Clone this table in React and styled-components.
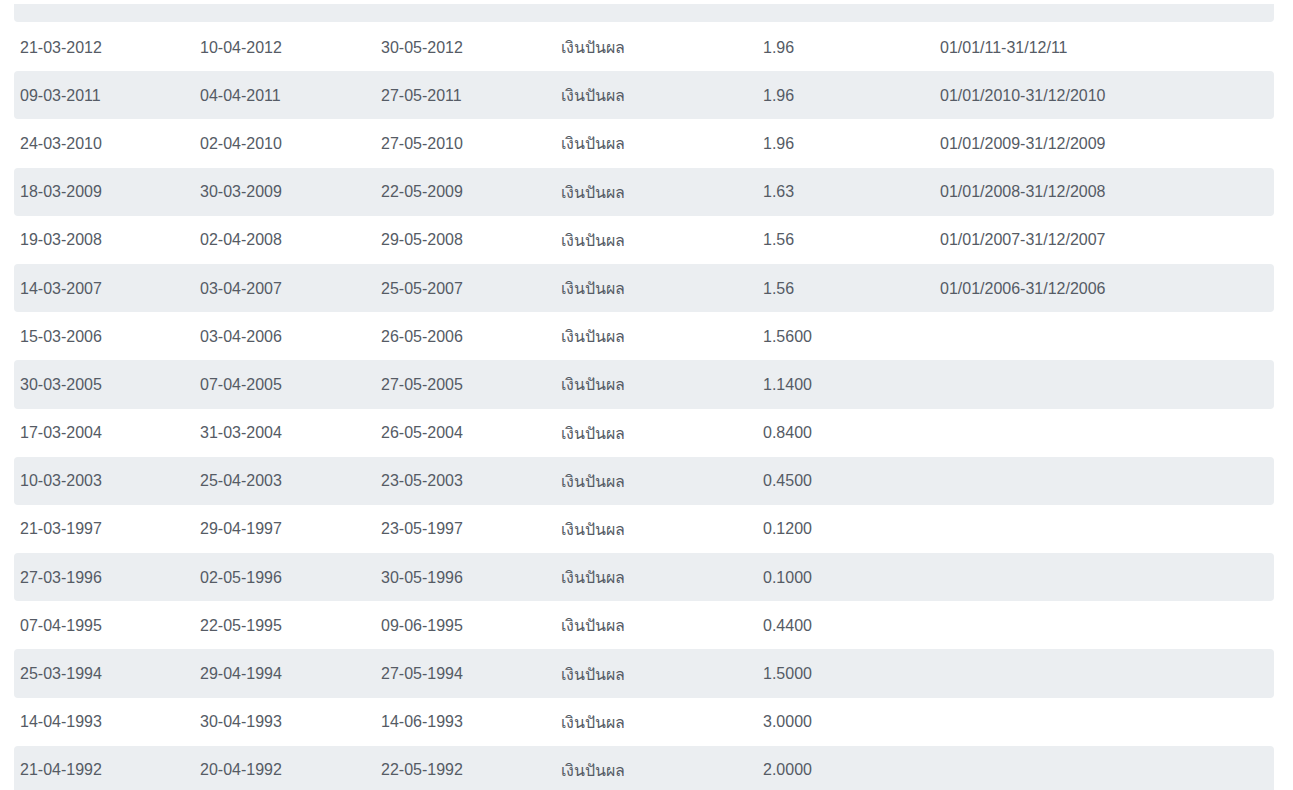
import React from 'react';
import styled, { createGlobalStyle } from 'styled-components';

const GlobalStyle = createGlobalStyle`
    body {
        margin: 0;
        background: #fff;
        font-family: "Liberation Sans", Arial, "Noto Sans", sans-serif;
    }
`;

const Viewport = styled.div`
    height: 788px;
    overflow: hidden;
    border-bottom: 1px solid #d9d9d9;
    padding: 4px 19px 0 14px;
`;

const Row = styled.div`
    display: grid;
    grid-template-columns: 180px 181px 180px 202px 177px 340px;
    height: ${props => props.short ? '18px' : '48.2px'};
    align-items: center;
    background: ${props => props.striped ? '#ebeef1' : 'transparent'};
    border-radius: ${props => props.short ? '0 0 4px 4px' : '4px'};
    margin-bottom: ${props => props.short ? '1px' : '0'};
`;

const Cell = styled.div`
    padding: 1px 0 0 ${props => props.pad || 6}px;
    font-size: 16px;
    color: #555b65;
    white-space: nowrap;
`;

const rows = [
    ['21-03-2012', '10-04-2012', '30-05-2012', '1.96', '01/01/11-31/12/11'],
    ['09-03-2011', '04-04-2011', '27-05-2011', '1.96', '01/01/2010-31/12/2010'],
    ['24-03-2010', '02-04-2010', '27-05-2010', '1.96', '01/01/2009-31/12/2009'],
    ['18-03-2009', '30-03-2009', '22-05-2009', '1.63', '01/01/2008-31/12/2008'],
    ['19-03-2008', '02-04-2008', '29-05-2008', '1.56', '01/01/2007-31/12/2007'],
    ['14-03-2007', '03-04-2007', '25-05-2007', '1.56', '01/01/2006-31/12/2006'],
    ['15-03-2006', '03-04-2006', '26-05-2006', '1.5600', ''],
    ['30-03-2005', '07-04-2005', '27-05-2005', '1.1400', ''],
    ['17-03-2004', '31-03-2004', '26-05-2004', '0.8400', ''],
    ['10-03-2003', '25-04-2003', '23-05-2003', '0.4500', ''],
    ['21-03-1997', '29-04-1997', '23-05-1997', '0.1200', ''],
    ['27-03-1996', '02-05-1996', '30-05-1996', '0.1000', ''],
    ['07-04-1995', '22-05-1995', '09-06-1995', '0.4400', ''],
    ['25-03-1994', '29-04-1994', '27-05-1994', '1.5000', ''],
    ['14-04-1993', '30-04-1993', '14-06-1993', '3.0000', ''],
    ['21-04-1992', '20-04-1992', '22-05-1992', '2.0000', ''],
];

export default function App() {
    return <>
        <GlobalStyle />
        <Viewport>
            <Row striped short />
            {rows.map((r, i) => (
                <Row key={i} striped={i % 2 === 1}>
                    <Cell>{r[0]}</Cell>
                    <Cell>{r[1]}</Cell>
                    <Cell>{r[2]}</Cell>
                    <Cell>เงินปันผล</Cell>
                    <Cell>{r[3]}</Cell>
                    <Cell>{r[4]}</Cell>
                </Row>
            ))}
        </Viewport>
    </>;
}
